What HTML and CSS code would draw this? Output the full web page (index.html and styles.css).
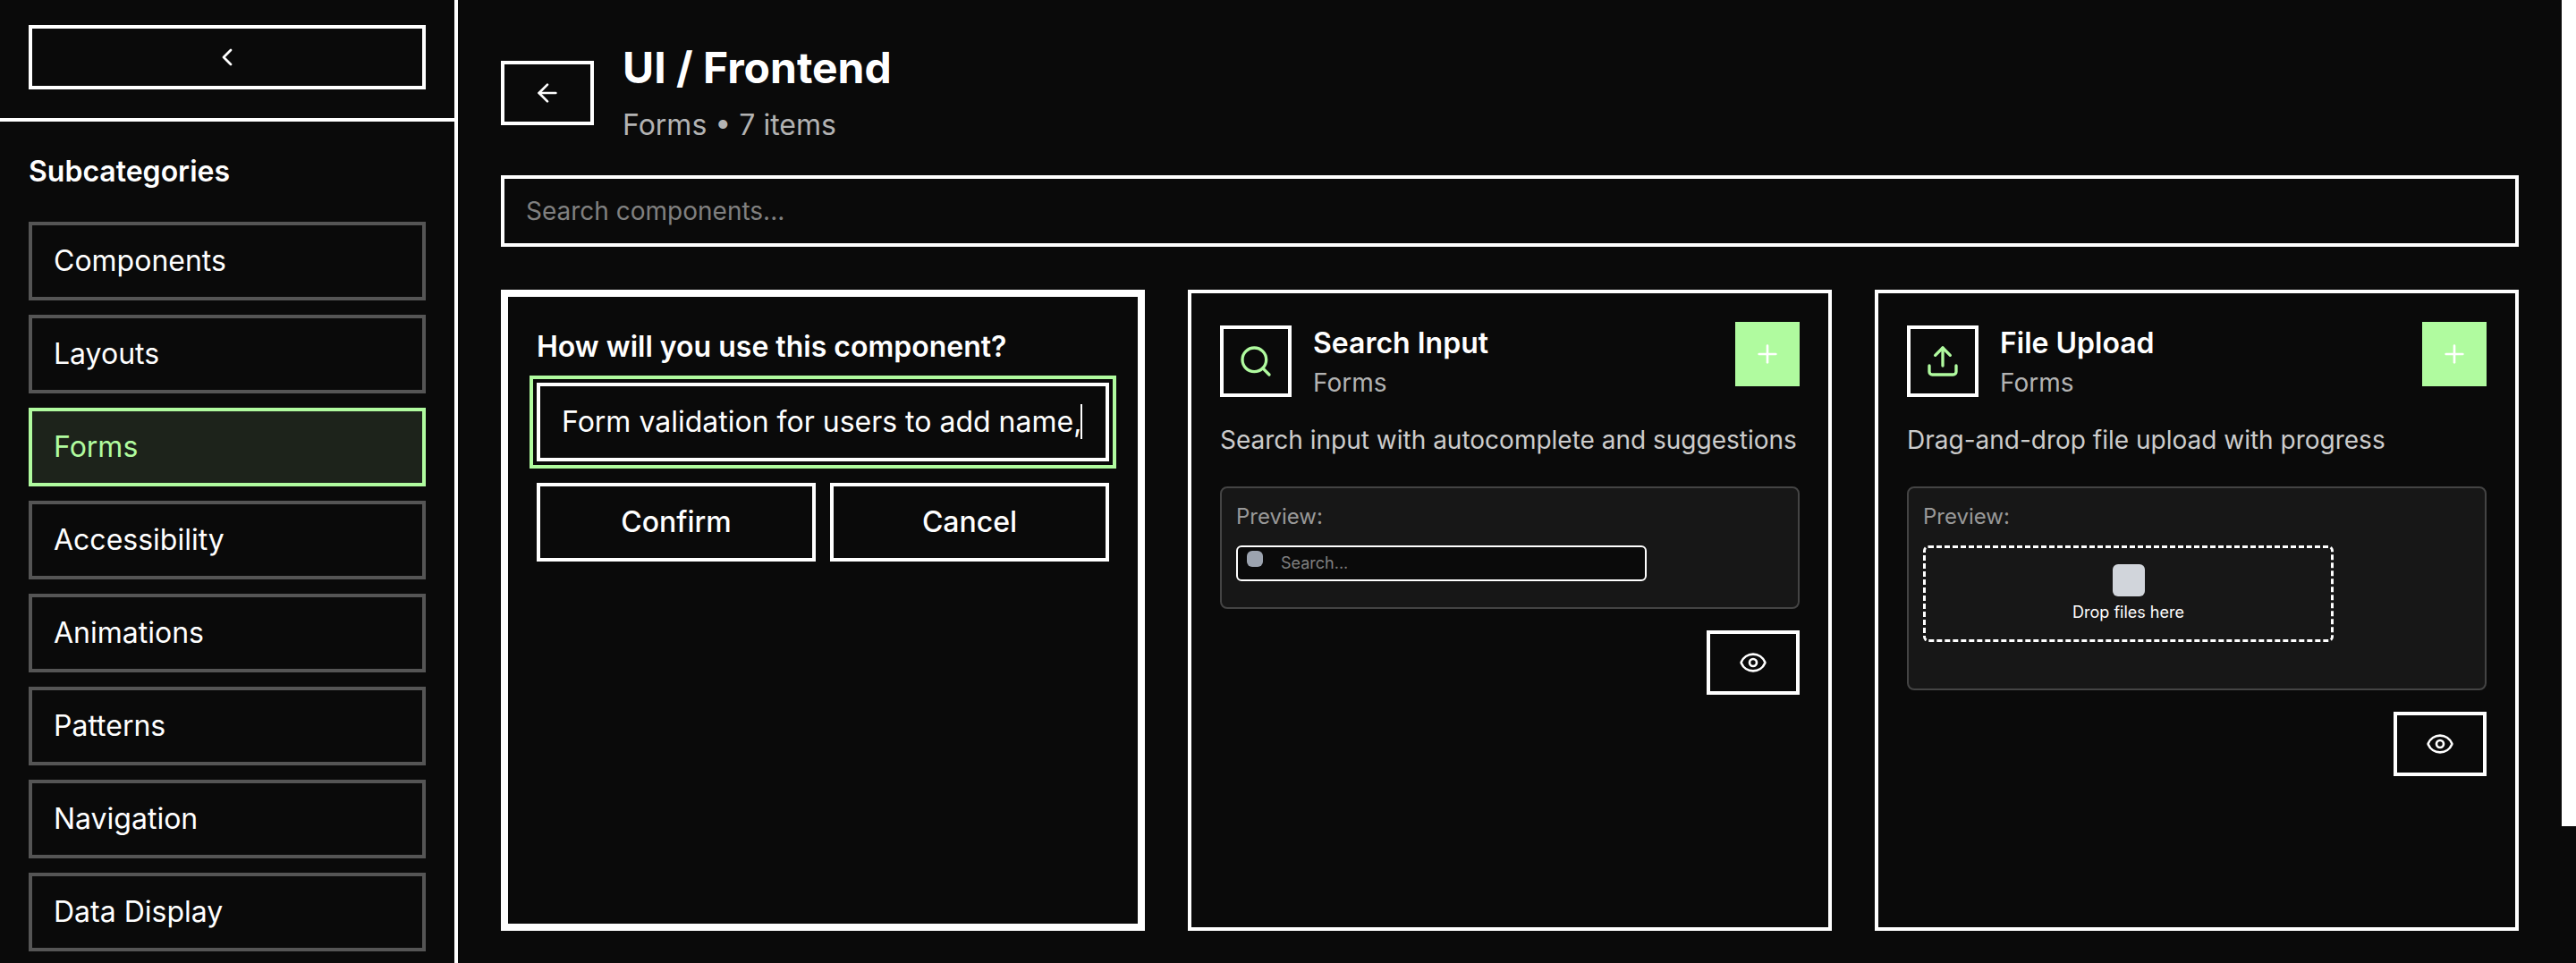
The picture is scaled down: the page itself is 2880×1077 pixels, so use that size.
FILE: index.html
```html
<!DOCTYPE html>
<html lang="en">
<head>
<meta charset="utf-8">
<meta name="viewport" content="width=device-width, initial-scale=1">
<title>UI / Frontend - Forms</title>
<link rel="stylesheet" href="styles.css">
</head>
<body>
<div class="app">
  <aside class="sidebar">
    <div class="sidebar-head">
      <button class="box-button" type="button" aria-label="Collapse sidebar">
        <svg class="icon" viewBox="0 0 24 24"><path d="m15 18-6-6 6-6"/></svg>
      </button>
    </div>
    <nav class="sidebar-body" aria-labelledby="nav-title">
      <h2 class="heading" id="nav-title">Subcategories</h2>
      <div class="nav-list">
        <button class="nav-item" type="button">Components</button>
        <button class="nav-item" type="button">Layouts</button>
        <button class="nav-item nav-item-active" type="button" aria-current="true">Forms</button>
        <button class="nav-item" type="button">Accessibility</button>
        <button class="nav-item" type="button">Animations</button>
        <button class="nav-item" type="button">Patterns</button>
        <button class="nav-item" type="button">Navigation</button>
        <button class="nav-item" type="button">Data Display</button>
      </div>
    </nav>
  </aside>

  <main class="main">
    <header class="page-head">
      <button class="box-button icon-button" type="button" aria-label="Back">
        <svg class="icon" viewBox="0 0 24 24"><path d="m12 19-7-7 7-7"/><path d="M19 12H5"/></svg>
      </button>
      <div>
        <h1 class="page-title">UI / Frontend</h1>
        <p class="page-subtitle">Forms • 7 items</p>
      </div>
    </header>

    <input class="search" type="search" placeholder="Search components..." aria-label="Search components">

    <div class="cards">
      <form class="card card-selected">
        <label class="heading" for="usage">How will you use this component?</label>
        <div class="usage-field">
          <input class="usage" id="usage" type="text" value="Form validation for users to add name,">
          <span class="caret" aria-hidden="true"></span>
        </div>
        <div class="actions">
          <button class="action" type="button">Confirm</button>
          <button class="action" type="button">Cancel</button>
        </div>
      </form>

      <article class="card">
        <header class="card-head">
          <div class="card-icon">
            <svg class="icon icon-large" viewBox="0 0 24 24"><circle cx="11" cy="11" r="8"/><path d="m21 21-4.300-4.300"/></svg>
          </div>
          <div class="card-titles">
            <h3 class="heading">Search Input</h3>
            <p class="card-category">Forms</p>
          </div>
          <button class="add" type="button" aria-label="Add Search Input">
            <svg class="icon" viewBox="0 0 24 24"><path d="M5 12h14"/><path d="M12 5v14"/></svg>
          </button>
        </header>
        <p class="card-text">Search input with autocomplete and suggestions</p>
        <section class="preview">
          <p class="preview-label">Preview:</p>
          <div class="preview-stage preview-stage-short">
            <div class="mini-search">
              <span class="mini-search-icon"></span>
              <input class="mini-search-input" type="text" placeholder="Search..." aria-label="Search preview">
            </div>
          </div>
        </section>
        <button class="box-button icon-button card-view" type="button" aria-label="View Search Input">
          <svg class="icon" viewBox="0 0 24 24"><path d="M2.062 12.348a1 1 0 0 1 0-.696 10.750 10.750 0 0 1 19.876 0 1 1 0 0 1 0 .696 10.750 10.750 0 0 1-19.876 0"/><circle cx="12" cy="12" r="3"/></svg>
        </button>
      </article>

      <article class="card">
        <header class="card-head">
          <div class="card-icon">
            <svg class="icon icon-large" viewBox="0 0 24 24"><path d="M21 15v4a2 2 0 0 1-2 2H5a2 2 0 0 1-2-2v-4"/><path d="m17 8-5-5-5 5"/><path d="M12 3v12"/></svg>
          </div>
          <div class="card-titles">
            <h3 class="heading">File Upload</h3>
            <p class="card-category">Forms</p>
          </div>
          <button class="add" type="button" aria-label="Add File Upload">
            <svg class="icon" viewBox="0 0 24 24"><path d="M5 12h14"/><path d="M12 5v14"/></svg>
          </button>
        </header>
        <p class="card-text">Drag-and-drop file upload with progress</p>
        <section class="preview">
          <p class="preview-label">Preview:</p>
          <div class="preview-stage preview-stage-tall">
            <div class="dropzone">
              <span class="dropzone-icon"></span>
              <span>Drop files here</span>
            </div>
          </div>
        </section>
        <button class="box-button icon-button card-view" type="button" aria-label="View File Upload">
          <svg class="icon" viewBox="0 0 24 24"><path d="M2.062 12.348a1 1 0 0 1 0-.696 10.750 10.750 0 0 1 19.876 0 1 1 0 0 1 0 .696 10.750 10.750 0 0 1-19.876 0"/><circle cx="12" cy="12" r="3"/></svg>
        </button>
      </article>
    </div>
  </main>

  <div class="rail" aria-hidden="true"><div class="rail-thumb"></div></div>
</div>
</body>
</html>
```
FILE: styles.css
```css
:root {
  --bg: #0a0a0a;
  --fg: #ffffff;
  --accent: #b0fb9f;
  --line: #555555;
  --muted: #b3b3b3;
}

* {
  box-sizing: border-box;
}

body {
  margin: 0;
  background: var(--bg);
  color: var(--fg);
  font-family: Inter, "Liberation Sans", sans-serif;
  font-size: 32px;
  line-height: 48px;
}

h1,
h2,
h3,
p {
  margin: 0;
}

button,
input {
  margin: 0;
  border: 4px solid var(--fg);
  border-radius: 0;
  background: transparent;
  color: inherit;
  font: inherit;
}

input[type="search"] {
  appearance: none;
}

.app {
  display: grid;
  grid-template-rows: minmax(0, 1fr);
  grid-template-columns: 512px minmax(0, 1fr) 16px;
  height: 100vh;
  overflow: hidden;
}

.icon {
  display: block;
  width: 32px;
  height: 32px;
  fill: none;
  stroke: currentColor;
  stroke-width: 2;
  stroke-linecap: round;
  stroke-linejoin: round;
}

.icon-large {
  width: 40px;
  height: 40px;
}

.heading {
  font-size: 32px;
  font-weight: 600;
  line-height: 48px;
}

.box-button {
  display: flex;
  align-items: center;
  justify-content: center;
  width: 100%;
  height: 72px;
  padding: 0;
}

.icon-button {
  width: 104px;
}

/* Sidebar */

.sidebar {
  border-right: 4px solid var(--fg);
}

.sidebar-head {
  padding: 28px 32px 32px;
  border-bottom: 4px solid var(--fg);
}

.sidebar-body {
  padding: 32px;
}

.nav-list {
  display: flex;
  flex-direction: column;
  gap: 16px;
  margin-top: 32px;
}

.nav-item {
  height: 88px;
  padding: 0 24px;
  border-color: var(--line);
  text-align: left;
}

.nav-item-active {
  border-color: var(--accent);
  background: #1d231b;
  color: var(--accent);
}

/* Main column */

.main {
  display: flex;
  flex-direction: column;
  padding: 44px 48px 36px;
}

.page-head {
  display: flex;
  align-items: center;
  gap: 32px;
}

.page-title {
  font-size: 48px;
  font-weight: 700;
  line-height: 64px;
}

.page-subtitle {
  margin-top: 8px;
  color: var(--muted);
}

.search {
  flex: none;
  width: 100%;
  height: 80px;
  margin-top: 32px;
  padding: 0 24px;
  font-size: 28px;
}

.search::placeholder,
.mini-search-input::placeholder {
  color: #808080;
  opacity: 1;
}

.cards {
  display: grid;
  flex: 1;
  grid-template-columns: repeat(3, minmax(0, 1fr));
  gap: 48px;
  margin-top: 48px;
}

.card {
  display: flex;
  flex-direction: column;
  padding: 32px;
  border: 4px solid var(--fg);
}

.card-selected {
  border-width: 8px;
}

.usage-field {
  position: relative;
  margin-top: 16px;
}

.usage {
  display: block;
  width: 100%;
  height: 88px;
  padding: 0 24px 2px;
  outline: 4px solid var(--accent);
  outline-offset: 4px;
}

.caret {
  position: absolute;
  top: 24px;
  right: 30px;
  width: 2px;
  height: 39px;
  background: var(--fg);
  pointer-events: none;
}

.usage:focus + .caret {
  display: none;
}

.actions {
  display: grid;
  grid-template-columns: 1fr 1fr;
  gap: 16px;
  margin-top: 24px;
}

.action {
  height: 88px;
  font-weight: 500;
}

.card-head {
  display: flex;
  align-items: center;
  gap: 24px;
}

.card-icon {
  display: grid;
  place-items: center;
  width: 80px;
  height: 80px;
  border: 4px solid var(--fg);
  color: var(--accent);
}

.card-titles {
  flex: 1;
}

.card-category {
  color: var(--muted);
  font-size: 28px;
  line-height: 40px;
}

.add {
  display: grid;
  align-self: flex-start;
  place-items: center;
  width: 72px;
  height: 72px;
  padding: 0;
  border: 0;
  background: var(--accent);
}

.card-text {
  margin-top: 24px;
  color: #cccccc;
  font-size: 28px;
  line-height: 40px;
}

.preview {
  margin-top: 32px;
  padding: 16px;
  border: 2px solid #444444;
  border-radius: 8px;
  background: #171717;
}

.preview-label {
  color: #999999;
  font-size: 24px;
  line-height: 32px;
}

.preview-stage {
  margin-top: 16px;
  padding-right: 25%;
}

.preview-stage-short {
  min-height: 53px;
}

.preview-stage-tall {
  min-height: 144px;
}

.mini-search {
  display: flex;
  align-items: flex-start;
  gap: 20px;
  height: 40px;
  padding: 4px 10px;
  border: 2px solid var(--fg);
  border-radius: 6px;
  background: var(--bg);
}

.mini-search-icon {
  width: 18px;
  height: 18px;
  border-radius: 6px;
  background: #9ca3af;
}

.mini-search-input {
  flex: 1;
  min-width: 0;
  height: 28px;
  padding: 0;
  border: 0;
  font-size: 18px;
}

.dropzone {
  display: flex;
  flex-direction: column;
  align-items: center;
  gap: 6px;
  height: 108px;
  padding: 18px;
  border: 3px dashed var(--fg);
  border-radius: 6px;
  font-size: 18px;
  line-height: 24px;
}

.dropzone-icon {
  width: 36px;
  height: 36px;
  border-radius: 6px;
  background: #d1d5db;
}

.card-view {
  align-self: flex-end;
  margin-top: 24px;
}

/* Scroll rail */

.rail {
  display: grid;
  grid-template-rows: 924fr 153fr;
}

.rail-thumb {
  background: var(--fg);
}
```
